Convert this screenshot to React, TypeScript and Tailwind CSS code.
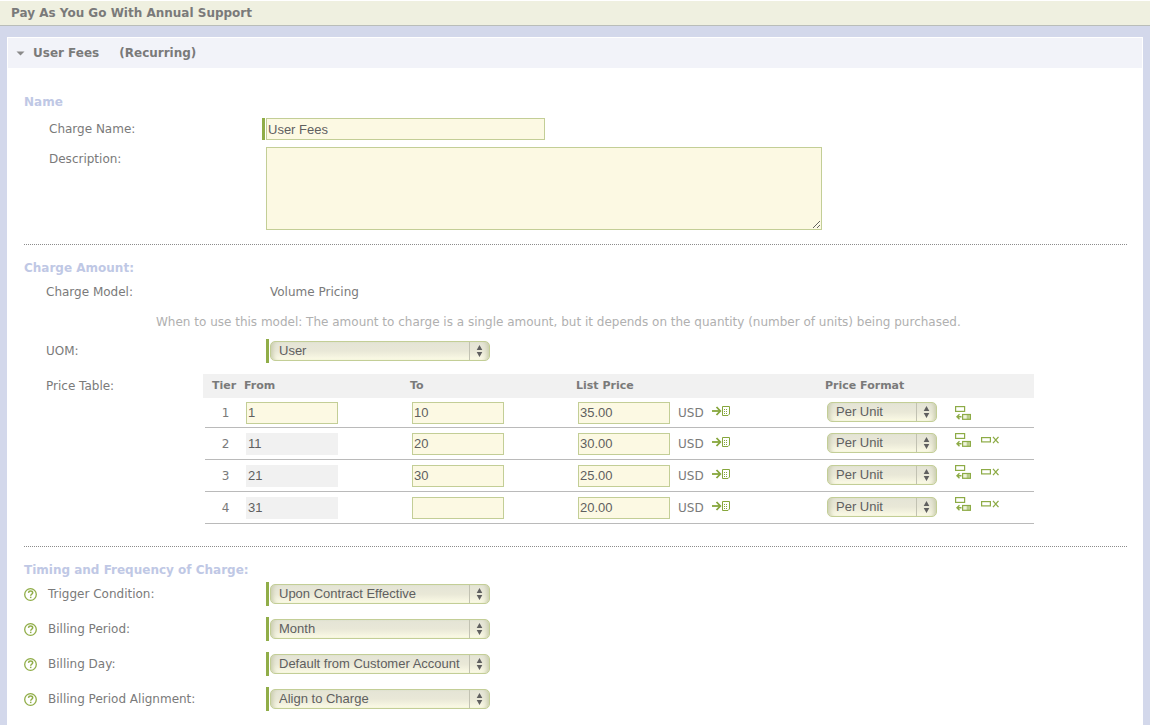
import type { ReactNode } from 'react'

const tiers = [
  { from: '1', to: '10', price: '35.00' },
  { from: '11', to: '20', price: '30.00' },
  { from: '21', to: '30', price: '25.00' },
  { from: '31', to: '', price: '20.00' },
]

const timing = [
  { id: 'trigger', label: 'Trigger Condition:', value: 'Upon Contract Effective' },
  { id: 'period', label: 'Billing Period:', value: 'Month' },
  { id: 'day', label: 'Billing Day:', value: 'Default from Customer Account' },
  { id: 'alignment', label: 'Billing Period Alignment:', value: 'Align to Charge' },
]

const field =
  'border border-[#c3ce96] bg-[#fcf9e3] font-[Liberation_Sans,sans-serif] text-[13px] text-[#5f5f5f] outline-none'

function HelpIcon() {
  return (
    <svg width="13" height="13" viewBox="0 0 13 13" fill="none" stroke="#90ad48">
      <circle cx="6.5" cy="6.5" r="5.8" strokeWidth="1.3" />
      <path d="M4.500 4.900C4.600 3.500 5.500 3.100 6.500 3.100c1.400 0 2.200.600 2.200 1.700 0 1.400-2 1.500-2 3" strokeWidth="1.500" />
      <path d="M6.700 8.700v1.400" strokeWidth="1.500" />
    </svg>
  )
}

function CopyPriceIcon() {
  return (
    <svg width="18" height="10" viewBox="0 0 18 10" fill="none" stroke="#86a63c">
      <path d="M0 5h8" strokeWidth="1.800" />
      <path d="M4.500 1L8.300 5L4.500 9" strokeWidth="1.800" />
      <path d="M10.500 .5h7v7.500l-1.500 1.500h-5.500z" fill="#fff" />
      <path d="M12 3.500h1M14 3.500h1M12 5.500h1M14 5.500h1M12 7.500h1M14 7.500h1" />
    </svg>
  )
}

function InsertTierIcon() {
  return (
    <svg width="16" height="14" viewBox="0 0 16 14" fill="none" stroke="#8dab46">
      <rect x=".6" y=".6" width="9" height="4.800" fill="#fff" strokeWidth="1.200" />
      <path d="M1.500 10.800h5M4.500 8.300L2 10.800l2.500 2.500" strokeWidth="1.400" />
      <rect x="7.600" y="8.500" width="7.800" height="4.800" fill="#eef3dc" strokeWidth="1.200" />
      <path d="M13.200 8.500v4.800" strokeWidth="3" strokeOpacity=".55" />
    </svg>
  )
}

function DeleteTierIcon() {
  return (
    <svg width="18" height="8" viewBox="0 0 18 8" fill="none" stroke="#8dab46">
      <rect x=".6" y="1.600" width="8.800" height="4.300" strokeWidth="1.200" />
      <path d="M12 .8l5.500 6.400M17.500 .8L12 7.200" strokeWidth="1.300" />
    </svg>
  )
}

function Select({ id, label, value, className }: { id?: string; label?: string; value: string; className: string }) {
  return (
    <span className={`inline-grid h-5 ${className}`}>
      <select
        id={id}
        aria-label={label}
        className="col-start-1 row-start-1 h-5 w-full appearance-none rounded-[5px] border border-[#c3ce96] bg-linear-to-b from-[#e4e4d6] via-[#e9e8d7] to-[#fcfbe6] pl-2 font-[Liberation_Sans,sans-serif] text-[13px] leading-4 text-[#5f5f5f] shadow-[inset_5px_0_4px_-3px_#c9ccae,inset_-5px_0_4px_-3px_#c9ccae] outline-none"
      >
        <option>{value}</option>
      </select>
      <span className="pointer-events-none col-start-1 row-start-1 my-px flex w-[21px] items-center justify-self-end border-l border-[#c2c2b2] pl-[6px]">
        <svg width="7" height="12" viewBox="0 0 7 12" fill="#5f5f5f">
          <path d="M3.500 0L6.300 5H.7zM3.500 12L.7 7h5.600z" />
        </svg>
      </span>
    </span>
  )
}

function RequiredSelect({ id, value }: { id: string; value: string }) {
  return (
    <div className="flex h-6 items-center border-l-3 border-[#90ad48] pl-px">
      <Select id={id} value={value} className="w-[220px]" />
    </div>
  )
}

function SectionTitle({ children }: { children: ReactNode }) {
  return <h3 className="text-xs leading-5 font-bold text-[#bfc8e5]">{children}</h3>
}

export default function App() {
  return (
    <div className="flex min-h-screen flex-col bg-[#d3d8eb] font-[Verdana,DejaVu_Sans,sans-serif] text-xs text-[#7a7a7a]">
      <header className="border-t border-b border-t-white border-b-[#b9bdb9] bg-[#eff0e0] pl-[11px]">
        <h1 className="leading-6 font-bold">Pay As You Go With Annual Support</h1>
      </header>

      <main className="mx-[7px] mt-[11px] flex-1 border border-b-0 border-white bg-white">
        <h2 className="flex h-[30px] items-center bg-[#f2f3f9] pl-2 font-bold">
          <button type="button" aria-label="Collapse" className="mr-2">
            <svg width="9" height="5" viewBox="0 0 9 5" fill="#8a8a8a">
              <path d="M.5 .5h8L4.500 4.500z" />
            </svg>
          </button>
          <span className="mr-5">User Fees</span>
          <span>(Recurring)</span>
        </h2>

        <div className="pr-[15px] pl-4 pt-6">
          <section className="border-b border-dotted border-[#8c8c8c] pb-[14px]">
            <SectionTitle>Name</SectionTitle>
            <div className="mt-[6px] flex pl-[25px]">
              <label htmlFor="name" className="w-[213px] leading-[22px]">Charge Name:</label>
              <div className="flex border-l-3 border-[#90ad48] pl-px">
                <input id="name" defaultValue="User Fees" className={`h-[22px] w-[279px] px-px ${field}`} />
              </div>
            </div>
            <div className="mt-[7px] flex pl-[25px]">
              <label htmlFor="description" className="w-[217px] leading-6">Description:</label>
              <textarea id="description" className={`h-[83px] w-[556px] p-1 ${field}`} />
            </div>
          </section>

          <section className="border-b border-dotted border-[#8c8c8c] pt-[13px] pb-[22px]">
            <SectionTitle>Charge Amount:</SectionTitle>
            <div className="mt-1 flex pl-[22px] leading-5">
              <span className="w-[224px]">Charge Model:</span>
              <span>Volume Pricing</span>
            </div>
            <p className="mt-[10px] pl-[132px] leading-5 text-[#b0b0b0]">
              When to use this model: The amount to charge is a single amount, but it depends on the quantity (number of
              units) being purchased.
            </p>
            <div className="mt-[7px] flex pl-[22px]">
              <label htmlFor="uom" className="w-[220px] leading-6">UOM:</label>
              <RequiredSelect id="uom" value="User" />
            </div>
            <div className="mt-[11px] flex pl-[22px]">
              <span className="w-[157px] leading-6">Price Table:</span>
              <table className="w-[831px] table-fixed border-separate border-spacing-0 text-left">
                <colgroup>
                  <col className="w-[2px]" />
                  <col className="w-[39px]" />
                  <col className="w-[166px]" />
                  <col className="w-[166px]" />
                  <col className="w-[249px]" />
                  <col className="w-[130px]" />
                  <col />
                </colgroup>
                <thead className="h-6 bg-[#f1f1f1] text-[11px]">
                  <tr>
                    <th colSpan={2} className="pl-[9px]">Tier</th>
                    <th>From</th>
                    <th>To</th>
                    <th>List Price</th>
                    <th>Price Format</th>
                    <th aria-label="Actions" />
                  </tr>
                </thead>
                <tbody>
                  {tiers.map((tier, i) => (
                    <tr
                      key={tier.from}
                      className="h-8 first:h-[30px] [&>td]:border-b [&>td]:border-[#bababa] [&>td:first-child]:border-0"
                    >
                      <td />
                      <td className="pl-[2px] text-center">{i + 1}</td>
                      <td className="pl-[2px]">
                        <input
                          aria-label="From"
                          defaultValue={tier.from}
                          readOnly={i > 0}
                          className={`block h-[22px] w-[92px] px-px read-only:border-[#f1f1f1] read-only:bg-[#f1f1f1] ${field}`}
                        />
                      </td>
                      <td className="pl-[2px]">
                        <input aria-label="To" defaultValue={tier.to} className={`block h-[22px] w-[92px] px-px ${field}`} />
                      </td>
                      <td className="pl-[2px]">
                        <div className="flex items-center">
                          <input
                            aria-label="List price"
                            defaultValue={tier.price}
                            className={`h-[22px] w-[92px] px-px ${field}`}
                          />
                          <span className="w-[42px] pl-2">USD</span>
                          <button type="button" aria-label="Copy price" className="pb-1">
                            <CopyPriceIcon />
                          </button>
                        </div>
                      </td>
                      <td className="pl-[2px]">
                        <div className="flex pb-[2px]">
                          <Select label="Price format" value="Per Unit" className="w-[110px]" />
                        </div>
                      </td>
                      <td>
                        <div className={i > 0 ? 'flex items-center gap-[10px] pb-2' : 'flex items-center'}>
                          <button type="button" aria-label="Insert tier">
                            <InsertTierIcon />
                          </button>
                          {i > 0 && (
                            <button type="button" aria-label="Delete tier">
                              <DeleteTierIcon />
                            </button>
                          )}
                        </div>
                      </td>
                    </tr>
                  ))}
                </tbody>
              </table>
            </div>
          </section>

          <section className="pt-[13px] pb-5">
            <SectionTitle>Timing and Frequency of Charge:</SectionTitle>
            <div className="mt-[2px] space-y-[11px]">
              {timing.map((row) => (
                <div key={row.id} className="flex items-center">
                  <button type="button" aria-label="Help" className="w-6">
                    <HelpIcon />
                  </button>
                  <label htmlFor={row.id} className="w-[218px] leading-6">{row.label}</label>
                  <RequiredSelect id={row.id} value={row.value} />
                </div>
              ))}
            </div>
          </section>
        </div>
      </main>
    </div>
  )
}
